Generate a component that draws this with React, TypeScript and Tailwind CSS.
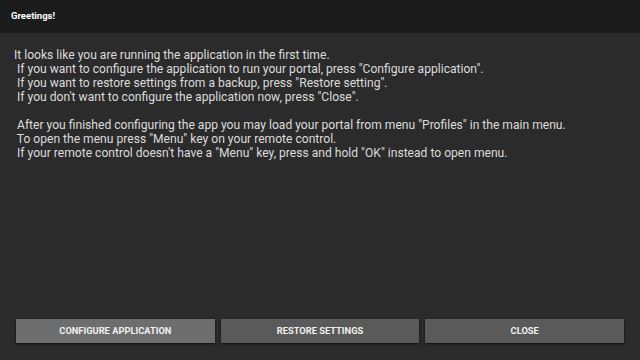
export default function App() {
  const lines = [
    'It looks like you are running the application in the first time.',
    ' If you want to configure the application to run your portal, press "Configure application".',
    ' If you want to restore settings from a backup, press "Restore setting".',
    ' If you don\'t want to configure the application now, press "Close".',
    '',
    ' After you finished configuring the app you may load your portal from menu "Profiles" in the main menu.',
    ' To open the menu press "Menu" key on your remote control.',
    ' If your remote control doesn\'t have a "Menu" key, press and hold "OK" instead to open menu.',
  ];

  return (
    <div className="w-[640px] h-[360px] flex flex-col bg-[#2b2b2b] font-['Roboto',sans-serif] overflow-hidden">
      {/* Title bar */}
      <div className="h-[33px] shrink-0 bg-[#1b1b1b] flex items-center px-[11px]">
        <span className="text-[9.5px] font-bold text-white">Greetings!</span>
      </div>

      {/* Message */}
      <div className="flex-1 pl-[14px] pt-[15px] text-[12.1px] leading-[14px] text-[#dcdcdc] whitespace-pre">
        {lines.map((l, i) => (
          <div key={i} className="h-[14px]">{l}</div>
        ))}
      </div>

      {/* Buttons */}
      <div className="flex gap-[6px] px-[16px] pb-[17px]">
        <button className="flex-1 h-[24px] bg-[#6e6e6e] text-[#f0f0f0] text-[9.3px] font-bold shadow-[0_1px_2px_rgba(0,0,0,0.7)]">
          CONFIGURE APPLICATION
        </button>
        <button className="flex-1 h-[24px] bg-[#5a5a5a] text-[#f0f0f0] text-[9.3px] font-bold shadow-[0_1px_2px_rgba(0,0,0,0.7)]">
          RESTORE SETTINGS
        </button>
        <button className="flex-1 h-[24px] bg-[#5a5a5a] text-[#f0f0f0] text-[9.3px] font-bold shadow-[0_1px_2px_rgba(0,0,0,0.7)]">
          CLOSE
        </button>
      </div>
    </div>
  );
}
